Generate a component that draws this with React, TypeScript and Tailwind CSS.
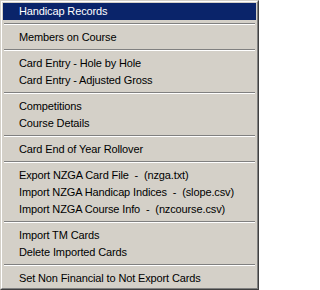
import React from "react";

type Entry = { label: string } | { sep: true };

const entries: Entry[] = [
  { label: "Handicap Records" },
  { sep: true },
  { label: "Members on Course" },
  { sep: true },
  { label: "Card Entry - Hole by Hole" },
  { label: "Card Entry - Adjusted Gross" },
  { sep: true },
  { label: "Competitions" },
  { label: "Course Details" },
  { sep: true },
  { label: "Card End of Year Rollover" },
  { sep: true },
  { label: "Export NZGA Card File  -  (nzga.txt)" },
  { label: "Import NZGA Handicap Indices  -  (slope.csv)" },
  { label: "Import NZGA Course Info  -  (nzcourse.csv)" },
  { sep: true },
  { label: "Import TM Cards" },
  { label: "Delete Imported Cards" },
  { sep: true },
  { label: "Set Non Financial to Not Export Cards" },
];

export default function App() {
  return (
    <div className="w-[259px] h-[290px] bg-[#d4d0c8] border-t border-l border-t-[#d4d0c8] border-l-[#d4d0c8] border-r border-b border-r-[#404040] border-b-[#404040]">
      <div className="h-full border-t border-l border-t-white border-l-white border-r border-b border-r-[#808080] border-b-[#808080] p-px">
        <div
          className="flex flex-col text-[11px] tracking-[-0.13px] text-black"
          style={{ fontFamily: "Tahoma, 'Liberation Sans', Arial, sans-serif" }}
        >
          {entries.map((e, i) =>
            "sep" in e ? (
              <div key={i} className="h-[9px] pt-[3px] px-px">
                <div className="h-px bg-[#808080]" />
                <div className="h-px bg-white" />
              </div>
            ) : (
              <div
                key={i}
                className={
                  "h-[17px] leading-[17px] pl-4 whitespace-pre " +
                  (i === 0 ? "bg-[#0a246a] text-white" : "")
                }
              >
                {e.label}
              </div>
            )
          )}
        </div>
      </div>
    </div>
  );
}
